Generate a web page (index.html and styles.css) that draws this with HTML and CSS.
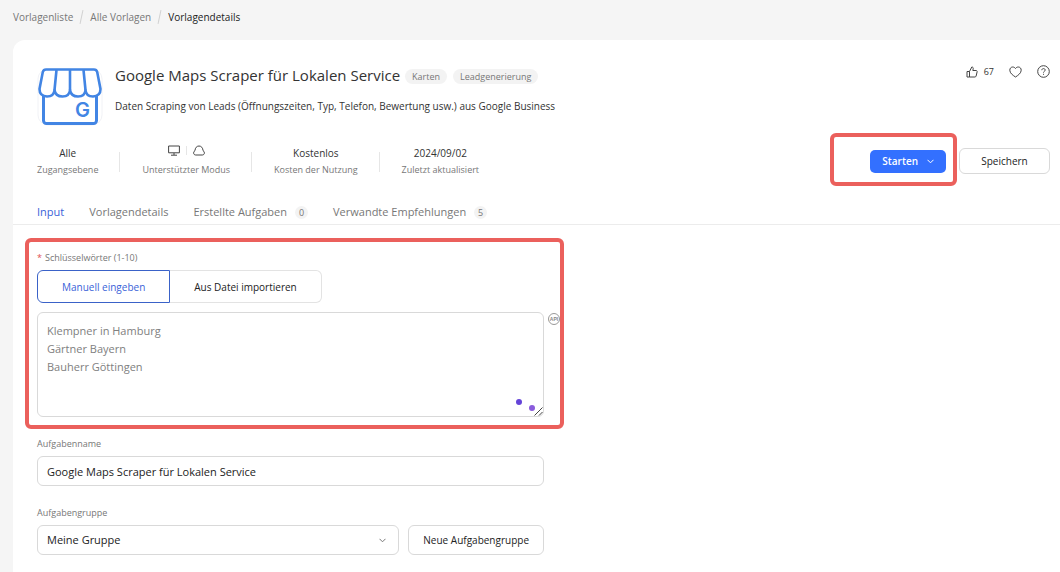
FILE: index.html
```html
<!DOCTYPE html>
<html lang="de">
<head>
<meta charset="utf-8">
<meta name="viewport" content="width=device-width, initial-scale=1">
<title>Vorlagendetails</title>
<link rel="stylesheet" href="styles.css">
</head>
<body>
<nav class="breadcrumb" aria-label="Brotkrumen">
  <a href="#">Vorlagenliste</a><span class="slash"></span>
  <a href="#">Alle Vorlagen</a><span class="slash"></span>
  <a href="#" class="current" aria-current="page">Vorlagendetails</a>
</nav>
<main class="card">
  <header class="head">
    <svg class="logo" viewBox="0 0 66 60" fill="none" stroke="#4285e4" stroke-width="3" stroke-linejoin="round" aria-hidden="true">
      <rect x="1" y="2" width="64" height="56" rx="10" stroke="#f1f2f6" stroke-width="1"/>
      <path d="M6.500 27v26.500a3 3 0 0 0 3 3h47a3 3 0 0 0 3-3V27"/>
      <path fill="#fff" stroke-width="2.600" d="M9 2.500h48q2.500 0 3.200 2.500L63.500 22q0 7-7.500 7.500Q49 29.500 48.500 23 48 29.500 41 29.500T33 23Q32.500 29.500 25.500 29.500T17.500 23Q17 29.500 10 29.500 2.500 29 2.500 22L5.800 5Q6.500 2.500 9 2.500Z"/>
      <path stroke-width="2.600" d="M19.500 3l-2 20M33 3v20M46.500 3l2 20"/>
      <text class="logo-letter" x="38" y="50">G</text>
    </svg>
    <div class="intro">
      <div class="title-row">
        <h1>Google Maps Scraper für Lokalen Service</h1>
        <span class="tag">Karten</span>
        <span class="tag">Leadgenerierung</span>
      </div>
      <p class="desc">Daten Scraping von Leads (Öffnungszeiten, Typ, Telefon, Bewertung usw.) aus Google Business</p>
    </div>
    <div class="tools">
      <button type="button" class="tool" aria-label="Gefällt mir">
        <svg width="12" height="12" viewBox="0 0 12 12" class="icon"><path d="M1 5.500h2.500v5.500H1ZM3.500 5.500 5.800 1c1.200 0 1.600.8 1.400 1.800L6.800 4.500h3.300c.8 0 1.200.6 1 1.400l-1 4.200c-.2.600-.6.900-1.200.9H3.500"/></svg>
        <span>67</span>
      </button>
      <button type="button" class="tool" aria-label="Merken">
        <svg width="13" height="12" viewBox="0 0 13 12" class="icon"><path d="M6.500 11C4 9.400.8 7.200.8 4.200.8 2.300 2.100 1 3.700 1c1.100 0 2.200.6 2.800 1.500C7.100 1.600 8.200 1 9.300 1c1.600 0 2.900 1.300 2.900 3.200 0 3-3.200 5.200-5.700 6.800Z"/></svg>
      </button>
      <button type="button" class="tool" aria-label="Hilfe">
        <svg width="13" height="13" viewBox="0 0 13 13" class="icon"><circle cx="6.500" cy="6.500" r="5.800"/><path d="M4.800 5.200c0-1 .7-1.600 1.700-1.600s1.700.6 1.700 1.500c0 1.200-1.700 1.200-1.700 2.500M6.500 8.800v1"/></svg>
      </button>
    </div>
  </header>
  <div class="facts-row">
    <ul class="facts">
      <li><span class="value">Alle</span><span class="name">Zugangsebene</span></li>
      <li>
        <span class="value modes">
          <svg width="12" height="11" viewBox="0 0 12 11" class="icon"><path d="M.6 1h10.800v6.800H.6ZM6 8v2M3 10.200h6"/></svg>
          <i></i>
          <svg width="12" height="11" viewBox="0 0 12 11" class="icon"><path d="M2.700 10C1.400 10 .6 9 .6 7.900S1.200 6 2 5.600C2.100 2.900 3.700 1 6 1s3.900 1.900 4 4.600c.8.400 1.400 1.200 1.400 2.300S10.600 10 9.300 10Z"/></svg>
        </span>
        <span class="name">Unterstützter Modus</span>
      </li>
      <li><span class="value">Kostenlos</span><span class="name">Kosten der Nutzung</span></li>
      <li><span class="value">2024/09/02</span><span class="name">Zuletzt aktualisiert</span></li>
    </ul>
    <div class="actions">
      <div class="start-wrap">
        <button type="button" class="start">Starten
          <svg width="7" height="5" viewBox="0 0 7 5" class="chevron"><path d="M.5.800 3.500 3.800 6.500.800"/></svg>
        </button>
      </div>
      <button type="button" class="btn save">Speichern</button>
    </div>
  </div>
  <nav class="tabs">
    <a href="#" class="active">Input</a>
    <a href="#">Vorlagendetails</a>
    <a href="#">Erstellte Aufgaben<span class="count">0</span></a>
    <a href="#">Verwandte Empfehlungen<span class="count">5</span></a>
  </nav>
  <form class="form">
    <section class="keywords">
      <label class="label" for="keywords"><span class="req">*</span>Schlüsselwörter (1-10)</label>
      <div class="switch">
        <button type="button" class="selected">Manuell eingeben</button><button type="button">Aus Datei importieren</button>
      </div>
      <div class="area">
        <textarea id="keywords" placeholder="Klempner in Hamburg&#10;Gärtner Bayern&#10;Bauherr Göttingen"></textarea>
        <svg class="api" width="12" height="12" viewBox="0 0 12 12" aria-hidden="true"><circle cx="6" cy="6" r="5.500"/><text x="6" y="8">API</text></svg>
        <span class="dot dot-a"></span>
        <span class="dot dot-b"></span>
        <svg class="grip" width="9" height="9" viewBox="0 0 9 9" aria-hidden="true"><path d="M.5 8.500l8-8M5 8.500 8.500 5"/></svg>
      </div>
    </section>
    <section class="field">
      <label class="label" for="task">Aufgabenname</label>
      <input id="task" type="text" class="box" value="Google Maps Scraper für Lokalen Service">
    </section>
    <section class="field">
      <label class="label" for="group">Aufgabengruppe</label>
      <div class="group-row">
        <div class="select">
          <select id="group" class="box"><option>Meine Gruppe</option></select>
          <svg width="7" height="5" viewBox="0 0 7 5" class="chevron"><path d="M.5.800 3.500 3.800 6.500.800"/></svg>
        </div>
        <button type="button" class="btn">Neue Aufgabengruppe</button>
      </div>
    </section>
  </form>
</main>
</body>
</html>
```
FILE: styles.css
```css
* { box-sizing: border-box; }
body {
  margin: 0;
  min-height: 100vh;
  display: flex;
  flex-direction: column;
  background: #f5f5f5;
  color: #333;
  font: 10px/16px "Open Sans", "Noto Sans", sans-serif;
}
button, input, select, textarea { font: inherit; color: inherit; }
button { cursor: pointer; }
a { color: inherit; text-decoration: none; }
h1, p, ul { margin: 0; padding: 0; }
.icon { display: block; fill: none; stroke: #444; stroke-width: 1; stroke-linejoin: round; }
.chevron { display: block; fill: none; stroke: currentColor; stroke-width: 1; }

.breadcrumb { display: flex; align-items: center; gap: 8px; padding: 9px 13px 15px; color: #777; }
.breadcrumb .current { color: #222; }
.slash { width: 1px; height: 14px; background: #d2d2d2; transform: rotate(12deg); }

.card { flex: 1; margin-left: 13px; background: #fff; border-radius: 12px 0 0 0; }
.head { display: flex; align-items: flex-start; padding: 25px 10px 0 24px; }
.logo { width: 66px; height: 60px; flex: none; margin-top: 2px; }
.logo-letter { font: 600 20px Inter, sans-serif; fill: #4285e4; stroke: none; }
.intro { flex: 1; margin-left: 12px; }
.title-row { display: flex; align-items: center; }
h1 { font-size: 15px; line-height: 20px; font-weight: 400; color: #333; margin-right: 5px; }
.tag { height: 15px; line-height: 15px; padding: 0 7px; margin: 3px 6px 0 0; border-radius: 8px; background: #f3f3f3; color: #777; font-size: 9px; }
.desc { margin-top: 13px; }
.tools { display: flex; align-items: center; gap: 15px; }
.tool { display: flex; align-items: center; gap: 6px; padding: 0; border: 0; background: none; font-size: 9px; line-height: 12px; }

.facts-row { display: flex; justify-content: space-between; margin-top: 17px; padding: 0 10px 0 24px; }
.facts { display: flex; list-style: none; }
.facts li { position: relative; display: flex; flex-direction: column; align-items: center; margin-right: 44px; }
.facts li:not(:last-child)::after { content: ""; position: absolute; right: -22px; top: 8px; width: 1px; height: 20px; background: #e6e6e6; }
.value { height: 18px; line-height: 19px; }
.name { font-size: 9px; color: #777; }
.modes { display: flex; align-items: center; gap: 6px; padding-bottom: 5px; }
.modes i { width: 1px; height: 9px; background: #e6e6e6; }
.actions { display: flex; align-items: center; }
.start-wrap { position: relative; margin-right: 13px; }
.start-wrap::after { content: ""; position: absolute; inset: -17px -11px -13px -40px; border: 4px solid #eb605c; border-radius: 6px; pointer-events: none; }
.start { display: flex; align-items: center; gap: 9px; height: 23px; padding: 0 12px; border: 0; border-radius: 5px; background: #3370ff; color: #fff; font-weight: 600; }
.btn { height: 30px; padding: 0 14px; border: 1px solid #d9d9d9; border-radius: 6px; background: #fff; color: #222; white-space: nowrap; }
.save { width: 91px; height: 26px; }

.tabs { display: flex; gap: 25px; margin-top: 26px; padding: 0 24px 4px; border-bottom: 1px solid #ececec; color: #777; font-size: 11px; }
.tabs a { display: flex; align-items: center; }
.tabs .active { color: #3a62d8; }
.count { width: 13px; height: 13px; margin-left: 8px; border-radius: 50%; background: #f3f3f3; font-size: 9px; line-height: 13px; text-align: center; }

.form { width: 507px; margin: 25px 0 16px 24px; }
.label { display: block; font-size: 9px; line-height: 16px; color: #777; }
.req { color: #e05050; margin-right: 3px; }
.keywords { position: relative; }
.keywords::after { content: ""; position: absolute; inset: -12px -20px -12px -12px; border: 4px solid #eb605c; border-radius: 6px; pointer-events: none; }
.switch { display: flex; margin-top: 4px; }
.switch button { height: 33px; padding: 0 24px; border: 1px solid #e3e3e3; border-left: 0; border-radius: 0 6px 6px 0; background: #fff; color: #222; }
.switch .selected { border: 1px solid #3a62c8; border-radius: 6px 0 0 6px; color: #3a62d8; }
.area { position: relative; margin-top: 9px; }
textarea { display: block; width: 100%; height: 105px; padding: 9px; border: 1px solid #d9d9d9; border-radius: 6px; background: #fff; font-size: 11px; line-height: 18px; resize: none; }
textarea::placeholder { color: #808080; opacity: 1; }
.api { position: absolute; right: -16px; top: 1px; fill: none; stroke: #999; }
.api text { font: 700 5px "Liberation Sans", sans-serif; fill: #888; stroke: none; text-anchor: middle; }
.dot { position: absolute; width: 6px; height: 6px; border-radius: 50%; }
.dot-a { right: 22px; bottom: 12px; background: #6444d8; }
.dot-b { right: 9px; bottom: 6px; background: #8a5cdc; }
.grip { position: absolute; right: 1px; bottom: 1px; fill: none; stroke: #444; stroke-width: 1; }
.field { margin-top: 19px; }
.box { display: block; width: 100%; height: 30px; margin: 0; padding: 0 9px; border: 1px solid #d9d9d9; border-radius: 6px; background: #fff; color: #222; font-size: 11px; appearance: none; }
.field .label { margin-bottom: 4px; }
.group-row { display: flex; gap: 9px; }
.select { position: relative; flex: 1; }
.select .chevron { position: absolute; right: 13px; top: 13px; color: #777; pointer-events: none; }
```
